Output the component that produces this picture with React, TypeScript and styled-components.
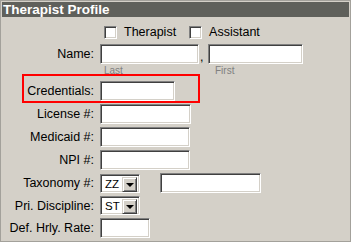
import React from 'react';
import styled, { createGlobalStyle } from 'styled-components';

const GlobalStyle = createGlobalStyle`
	body {
		margin: 0;
		background: #ffffff;
		font-family: 'Liberation Sans', Arial, sans-serif;
	}
`;

const Panel = styled.div`
	box-sizing: border-box;
	width: 351px;
	height: 242px;
	border: 1px solid #a3a19b;
	padding: 1px;
	background: #d4d0c8;
	color: #000;
	font-size: 12.5px;
`;

const Header = styled.div`
	height: 15px;
	line-height: 15px;
	padding-left: 1px;
	background: #5f605b;
	color: #fff;
	font-weight: bold;
	font-size: 13.5px;
	white-space: nowrap;
`;

const Form = styled.div`
	display: flex;
	flex-direction: column;
`;

const Row = styled.div<{ $top?: number }>`
	display: grid;
	grid-template-columns: 92px auto;
	column-gap: 6px;
	align-items: center;
	margin-top: ${(p) => p.$top ?? 3}px;
`;

const Highlight = styled.div`
	display: grid;
	grid-template-columns: 70px auto;
	column-gap: 6px;
	align-items: center;
	box-sizing: border-box;
	width: 178px;
	margin-left: 20px;
	padding-top: 5px;
	border: 2px solid #ff0000;
`;

const Label = styled.label`
	text-align: right;
	white-space: nowrap;
`;

const Field = styled.div`
	display: flex;
	align-items: center;
`;

const sunken = `
	box-sizing: border-box;
	background: #fff;
	border: 1px solid;
	border-color: #808080 #ffffff #ffffff #808080;
	box-shadow: inset 1px 1px #404040, inset -1px -1px #d4d0c8;
`;

const TextBox = styled.div<{ $w: number }>`
	${sunken}
	width: ${(p) => p.$w}px;
	height: 20px;
`;

const Check = styled.span`
	${sunken}
	display: inline-block;
	width: 13px;
	height: 13px;
	margin-left: 4px;
	margin-right: 7px;
`;

const CheckText = styled.span`
	margin-right: 9px;
	line-height: 13px;
`;

const Comma = styled.span`
	width: 8px;
	padding-left: 1px;
	align-self: flex-end;
	line-height: 14px;
`;

const Hints = styled.div`
	position: relative;
	height: 10px;
	box-sizing: border-box;
	padding-top: 2px;
	line-height: 9px;
	font-size: 10px;
	color: #808080;
	display: flex;
`;

const Hint = styled.span<{ $w: number }>`
	width: ${(p) => p.$w}px;
`;

const Select = styled.div`
	${sunken}
	display: flex;
	width: 40px;
	height: 19px;
	padding: 2px;
`;

const SelectValue = styled.span`
	flex: 1;
	font-size: 11.5px;
	line-height: 15px;
	padding-left: 2px;
`;

const DropButton = styled.span`
	box-sizing: border-box;
	width: 15px;
	height: 15px;
	background: #d4d0c8;
	border: 1px solid;
	border-color: #d4d0c8 #404040 #404040 #d4d0c8;
	box-shadow: inset 1px 1px #ffffff, inset -1px -1px #808080;
	display: flex;
	align-items: center;
	justify-content: center;
`;

const Arrow = styled.span`
	width: 0;
	height: 0;
	border-left: 4px solid transparent;
	border-right: 4px solid transparent;
	border-top: 4px solid #000;
	margin-top: 1px;
`;

const Spacer = styled.span`
	width: 20px;
`;

const Dropdown = ({ value }: { value: string }) => (
	<Select>
		<SelectValue>{value}</SelectValue>
		<DropButton>
			<Arrow />
		</DropButton>
	</Select>
);

export default function App(): JSX.Element {
	return (
		<>
			<GlobalStyle />
			<Panel>
				<Header>Therapist Profile</Header>
				<Form>
					<Row $top={9}>
						<span />
						<Field>
							<Check />
							<CheckText>Therapist</CheckText>
							<Check />
							<CheckText>Assistant</CheckText>
						</Field>
					</Row>
					<Row $top={5}>
						<Label>Name:</Label>
						<Field>
							<TextBox $w={99} />
							<Comma>,</Comma>
							<TextBox $w={95} />
						</Field>
					</Row>
					<Row $top={0}>
						<span />
						<Hints>
							<Hint $w={111} style={{ paddingLeft: 4 }}>Last</Hint>
							<Hint $w={60}>First</Hint>
						</Hints>
					</Row>
					<Highlight>
						<Label>Credentials:</Label>
						<TextBox $w={75} />
					</Highlight>
					<Row $top={1}>
						<Label>License #:</Label>
						<TextBox $w={91} />
					</Row>
					<Row>
						<Label>Medicaid #:</Label>
						<TextBox $w={90} />
					</Row>
					<Row>
						<Label>NPI #:</Label>
						<TextBox $w={90} />
					</Row>
					<Row>
						<Label>Taxonomy #:</Label>
						<Field>
							<Dropdown value="ZZ" />
							<Spacer />
							<TextBox $w={101} />
						</Field>
					</Row>
					<Row>
						<Label>Pri. Discipline:</Label>
						<Field>
							<Dropdown value="ST" />
						</Field>
					</Row>
					<Row>
						<Label>Def. Hrly. Rate:</Label>
						<TextBox $w={50} />
					</Row>
				</Form>
			</Panel>
		</>
	);
}
